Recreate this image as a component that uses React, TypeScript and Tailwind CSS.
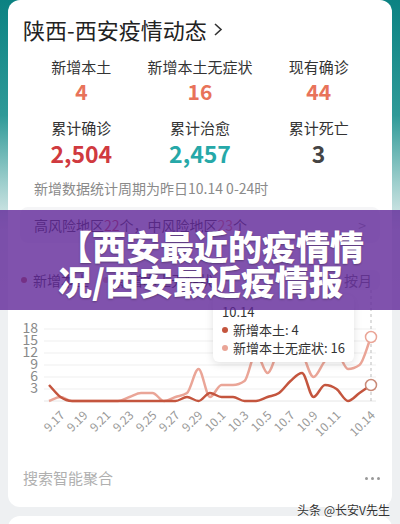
import React from "react";

const DARK = "#c4553e";
const LIGHT = "#eaa597";

// 9.16 .. 10.14
const local = [4, 1, 0, 0, 0, 0, 0, 0, 0, 0, 0, 0, 1, 0, 2, 1, 1, 0, 0, 1, 2, 5, 7, 1, 4, 3, 0, 2, 4];
const asym = [0, 1, 0, 0, 0, 0, 0, 1, 2, 2, 0, 1, 2, 8, 1, 4, 4, 5, 12, 7, 13, 15, 12, 6, 10, 12, 8, 9, 16];

const xLabels: [string, number][] = [
  ["9.17", 1], ["9.19", 3], ["9.21", 5], ["9.23", 7], ["9.25", 9], ["9.27", 11], ["9.29", 13],
  ["10.1", 15], ["10.3", 17], ["10.5", 19], ["10.7", 21], ["10.9", 23], ["10.11", 25], ["10.14", 28],
];

const X = (i: number) => 41 + 11.5 * i;
const Y = (v: number) => 111 - 4 * v;

function smoothPath(vals: number[]) {
  const pts = vals.map((v, i) => [X(i), Y(v)]);
  const n = pts.length;
  const m: number[] = [];
  for (let i = 0; i < n - 1; i++) m.push((pts[i + 1][1] - pts[i][1]) / (pts[i + 1][0] - pts[i][0]));
  const t: number[] = [];
  for (let i = 0; i < n; i++) {
    if (i === 0) t.push(m[0]);
    else if (i === n - 1) t.push(m[n - 2]);
    else if (m[i - 1] * m[i] <= 0) t.push(0);
    else {
      const s = Math.sign(m[i - 1]);
      t.push(s * Math.min(Math.abs(m[i - 1]), Math.abs(m[i]), 0.5 * Math.abs((m[i - 1] + m[i]) / 2)) * 2);
    }
  }
  let d = `M${pts[0][0]},${pts[0][1]}`;
  for (let i = 0; i < n - 1; i++) {
    const h = (pts[i + 1][0] - pts[i][0]) / 3;
    d += ` C${pts[i][0] + h},${pts[i][1] + t[i] * h} ${pts[i + 1][0] - h},${pts[i + 1][1] - t[i + 1] * h} ${pts[i + 1][0]},${pts[i + 1][1]}`;
  }
  return d;
}

function Stat({ label, value, color, big }: { label: string; value: string; color: string; big?: boolean }) {
  return (
    <div className="flex flex-col items-center">
      <div className="text-[15px] leading-[20px] text-[#333]">{label}</div>
      <div className={`${big ? "text-[23px] leading-[30px]" : "text-[21px] leading-[28px]"} font-bold ${color}`}>{value}</div>
    </div>
  );
}

function Chart() {
  return (
    <svg width="384" height="150" className="block">
      {[3, 6, 9, 12, 15, 18].map((v) => (
        <g key={v}>
          <line x1="36" x2="368" y1={Y(v)} y2={Y(v)} stroke="#efefef" strokeWidth="1" />
          <text x="30" y={Y(v)} dominantBaseline="middle" textAnchor="end" fontSize="14" fill="#8a8a8a">
            {v}
          </text>
        </g>
      ))}
      <line x1="36" x2="368" y1="111" y2="111" stroke="#e6e6e6" strokeWidth="1" />
      <line x1="363" x2="363" y1="0" y2="111" stroke="#bdbdbd" strokeWidth="1" strokeDasharray="3 3" />
      <path d={smoothPath(asym)} fill="none" stroke={LIGHT} strokeWidth="2.5" />
      <path d={smoothPath(local)} fill="none" stroke={DARK} strokeWidth="2.5" />
      <circle cx="363" cy={Y(16)} r="5.5" fill="#fff" stroke={LIGHT} strokeWidth="1.5" />
      <circle cx="363" cy={Y(4)} r="5.5" fill="#fff" stroke="#c98a78" strokeWidth="1.5" />
      {xLabels.map(([s, i]) => (
        <text key={s} x={X(i) + 5} y="126" textAnchor="end" fontSize="12" fill="#999" transform={`rotate(-45 ${X(i) + 5} 126)`}>
          {s}
        </text>
      ))}
    </svg>
  );
}

export default function App() {
  return (
    <div className="relative w-[400px] h-[524px] overflow-hidden bg-[linear-gradient(180deg,#0b8282_0%,#2f9a98_22%,#9fcfcd_35%,#e4eeee_44%,#eef0f2_55%,#eef0f2_100%)] font-['Noto_Sans_CJK_SC','Noto_Sans',sans-serif]">
      <div className="relative mx-2 h-[507px] rounded-[12px] bg-white">
        <div className="flex h-[57px] items-start pl-[15px] pt-[16px]">
          <span className="text-[22px] leading-[26px] text-[#222]">陕西-西安疫情动态</span>
          <svg width="10" height="26" viewBox="0 0 10 26" className="ml-[6px]">
            <path d="M2 8 L8 13.5 L2 19" fill="none" stroke="#333" strokeWidth="1.6" />
          </svg>
        </div>

        <div className="grid grid-cols-3 px-[14px]">
          <Stat label="新增本土" value="4" color="text-[#e8735a]" />
          <Stat label="新增本土无症状" value="16" color="text-[#e8735a]" />
          <Stat label="现有确诊" value="44" color="text-[#e8735a]" />
        </div>
        <div className="mt-[13px] grid grid-cols-3 px-[14px]">
          <Stat label="累计确诊" value="2,504" color="text-[#d03a3f]" big />
          <Stat label="累计治愈" value="2,457" color="text-[#26a8a8]" big />
          <Stat label="累计死亡" value="3" color="text-[#444]" big />
        </div>

        <div className="mt-[10px] pl-[26px] text-[14px] leading-[20px] text-[#8a8a8a]">新增数据统计周期为昨日10.14 0-24时</div>

        <div className="mx-[12px] mt-[9px] flex h-[36px] items-center justify-between rounded-[8px] bg-[#f5f5f7] pl-[14px] pr-[14px] text-[14px] text-[#333]">
          <span>
            高风险地区<span className="text-[#d03a3f]">22</span>个，中风险地区<span className="text-[#e8735a]">23</span>个
          </span>
          <span className="text-[#999]">&gt;</span>
        </div>

        <div className="mt-[27px] flex h-[20px] items-center justify-between pl-[13px] pr-[12px] text-[14px] leading-[20px] text-[#333]">
          <div className="flex items-center">
            <span className="mr-[6px] h-[6px] w-[6px] rounded-full bg-[#c4553e]" />
            新增本土
            <span className="ml-[14px] mr-[6px] h-[6px] w-[6px] rounded-full bg-[#eaa597]" />
            新增本土无症状
          </div>
          <div className="rounded-[6px] bg-[#f5f5f7] px-[8px] text-[#666]">按月</div>
        </div>

        <Chart />

        <div className="mt-[26px] flex h-[24px] items-center justify-between pl-[15px] pr-[12px]">
          <span className="text-[15px] leading-[24px] text-[#b0b0b0]">搜索智能聚合</span>
          <div className="flex gap-[3px]">
            <span className="h-[3px] w-[3px] rounded-full bg-[#999]" />
            <span className="h-[3px] w-[3px] rounded-full bg-[#999]" />
            <span className="h-[3px] w-[3px] rounded-full bg-[#999]" />
          </div>
        </div>

        <div className="absolute left-[205px] top-[295px] whitespace-nowrap rounded-[6px] bg-white px-[9px] pb-[5px] pt-[8px] text-[13px] leading-[18px] text-[#333] shadow-[0_2px_8px_rgba(0,0,0,0.12)]">
          <div>10.14</div>
          <div className="flex items-center">
            <span className="mr-[5px] h-[6px] w-[6px] rounded-full bg-[#c4553e]" />
            新增本土: 4
          </div>
          <div className="flex items-center">
            <span className="mr-[5px] h-[6px] w-[6px] rounded-full bg-[#eaa597]" />
            新增本土无症状: 16
          </div>
        </div>
      </div>

      <div className="mx-2 mt-[9px] h-[40px] rounded-[12px] bg-white" />

      <div className="absolute left-0 top-[210px] h-[100px] w-full bg-[#602798]/80 pl-[58px] pr-[30px] pt-[18px] text-[34px] font-black leading-[35px] text-white [text-shadow:0_1px_2px_rgba(0,0,0,0.3)]">
        【西安最近的疫情情况/西安最近疫情报
      </div>

      <div className="absolute right-[10px] top-[502px] text-[12px] leading-[16px] text-[#333] [text-shadow:0_0_2px_#fff,0_0_2px_#fff]">
        头条 @长安V先生
      </div>
    </div>
  );
}
